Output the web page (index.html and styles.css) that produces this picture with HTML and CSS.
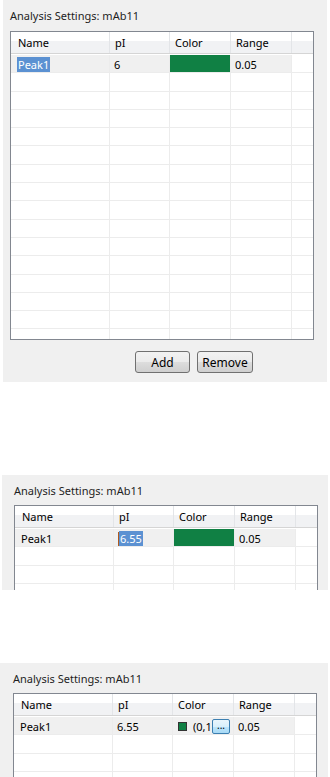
FILE: index.html
```html
<!DOCTYPE html>
<html lang="en">
<head>
  <meta charset="UTF-8">
  <meta name="viewport" content="width=device-width, initial-scale=1.0">
  <title>Analysis Settings</title>
  <link rel="stylesheet" href="styles.css">
</head>
<body>
  <!-- Panel 1: name selected -->
  <section class="panel panel-one">
    <div class="panel-title">Analysis Settings: mAb11</div>
    <div class="grid-table tall">
      <div class="grid-head">
        <div class="hcell">Name</div>
        <div class="hcell">pI</div>
        <div class="hcell">Color</div>
        <div class="hcell">Range</div>
        <div class="hcell filler"></div>
      </div>
      <div class="grid-body" id="body1"></div>
    </div>
    <div class="button-row">
      <button class="win-btn add">Add</button>
      <button class="win-btn">Remove</button>
    </div>
  </section>

  <!-- Panel 2: editing pI -->
  <section class="panel panel-two">
    <div class="panel-title">Analysis Settings: mAb11</div>
    <div class="grid-table">
      <div class="grid-head">
        <div class="hcell">Name</div>
        <div class="hcell">pI</div>
        <div class="hcell">Color</div>
        <div class="hcell">Range</div>
        <div class="hcell filler"></div>
      </div>
      <div class="grid-body">
        <div class="row first">
          <div class="cell">Peak1</div>
          <div class="cell"><span class="caret"></span><span class="selected">6.55</span></div>
          <div class="cell swatch"></div>
          <div class="cell">0.05</div>
          <div class="cell filler"></div>
        </div>
        <div class="row"><div class="cell"></div><div class="cell"></div><div class="cell"></div><div class="cell"></div><div class="cell filler"></div></div>
        <div class="row"><div class="cell"></div><div class="cell"></div><div class="cell"></div><div class="cell"></div><div class="cell filler"></div></div>
        <div class="row"><div class="cell"></div><div class="cell"></div><div class="cell"></div><div class="cell"></div><div class="cell filler"></div></div>
      </div>
    </div>
  </section>

  <!-- Panel 3: editing color -->
  <section class="panel panel-three">
    <div class="panel-title">Analysis Settings: mAb11</div>
    <div class="grid-table">
      <div class="grid-head">
        <div class="hcell">Name</div>
        <div class="hcell">pI</div>
        <div class="hcell">Color</div>
        <div class="hcell">Range</div>
        <div class="hcell filler"></div>
      </div>
      <div class="grid-body">
        <div class="row first">
          <div class="cell">Peak1</div>
          <div class="cell">6.55</div>
          <div class="cell color-edit">
            <span class="mini-swatch"></span>
            <span class="color-text">(0,1</span>
            <span class="dots-btn">...</span>
          </div>
          <div class="cell">0.05</div>
          <div class="cell filler"></div>
        </div>
        <div class="row"><div class="cell"></div><div class="cell"></div><div class="cell"></div><div class="cell"></div><div class="cell filler"></div></div>
        <div class="row"><div class="cell"></div><div class="cell"></div><div class="cell"></div><div class="cell"></div><div class="cell filler"></div></div>
        <div class="row"><div class="cell"></div><div class="cell"></div><div class="cell"></div><div class="cell"></div><div class="cell filler"></div></div>
      </div>
    </div>
  </section>

  <script>
    // fill the first table: one selected row, then empty rows
    const body1 = document.getElementById('body1');
    for (let i = 0; i < 17; i++) {
      const row = document.createElement('div');
      row.className = i === 0 ? 'row first' : 'row';
      if (i === 0) {
        row.innerHTML =
          '<div class="cell"><span class="selected">Peak1</span></div>' +
          '<div class="cell">6</div>' +
          '<div class="cell swatch"></div>' +
          '<div class="cell">0.05</div>' +
          '<div class="cell filler"></div>';
      } else {
        row.innerHTML = '<div class="cell"></div>'.repeat(4) + '<div class="cell filler"></div>';
      }
      body1.appendChild(row);
    }
  </script>
</body>
</html>
```

FILE: styles.css
```css
/* General */
body {
  margin: 0;
  background: #fff;
  font-family: "Noto Sans", "Open Sans", sans-serif;
  font-size: 11px;
  color: #000;
}

/* Panels */
.panel {
  background: #f0f0f0;
  box-sizing: border-box;
  overflow: hidden;
}

.panel-one {
  margin-left: 3px;
  width: 324px;
  height: 382px;
  padding: 7px 0 0 7px;
}

.panel-two {
  margin-top: 93px;
  margin-left: 2px;
  width: 326px;
  height: 115px;
  padding: 7px 0 0 12px;
}

.panel-three {
  margin-top: 73px;
  width: 328px;
  height: 114px;
  padding: 7px 0 0 13px;
}

.panel-title {
  height: 17px;
  line-height: 17px;
  margin-bottom: 7px;
  color: #1e1e1e;
}

.panel-two .panel-title,
.panel-three .panel-title {
  margin-bottom: 6px;
}

/* Table */
.grid-table {
  width: 304px;
  box-sizing: border-box;
  border: 1px solid #828790;
  background: #fff;
  overflow: hidden;
}

.grid-table.tall {
  height: 309px;
}

.panel-two .grid-table,
.panel-three .grid-table {
  border-bottom: none;
  height: 120px;
}

.grid-head,
.row {
  display: grid;
  grid-template-columns: 99px 60px 61px 61px 1fr;
}

.grid-head {
  height: 22px;
  background: linear-gradient(#fff 0, #fff 45%, #f1f2f4 45%, #f1f2f4 100%);
  border-bottom: 1px solid #d5d5d5;
  box-sizing: border-box;
}

.hcell {
  border-right: 1px solid #e3e5e8;
  padding: 3px 0 0 5px;
  line-height: 16px;
}

.hcell:first-child {
  padding-left: 7px;
}

.hcell.filler {
  border-right: none;
}

.grid-body {
  padding-top: 1px;
}

.row {
  height: 18.3px;
  box-sizing: border-box;
}

.cell {
  border-right: 1px solid #ececec;
  border-bottom: 1px solid #ececec;
  padding: 2px 0 0 4px;
  line-height: 15px;
  white-space: nowrap;
  overflow: hidden;
}

.cell:first-child {
  padding-left: 6px;
}

.cell.filler {
  border-right: none;
}

.row.first .cell {
  background: #f0f0f0;
}

.row.first .cell.filler {
  background: #fff;
}

.row.first .cell.swatch {
  background: #108044;
}

.selected {
  background: #5b91d2;
  color: #fff;
  padding: 0 1px;
}

.caret {
  display: inline-block;
  width: 1px;
  height: 14px;
  background: #b05a1c;
  vertical-align: -3px;
}

/* Color editor cell */
.color-edit {
  display: flex;
  align-items: center;
  padding-left: 5px;
}

.mini-swatch {
  flex: none;
  width: 7px;
  height: 7px;
  background: #108044;
  border: 1px solid #333;
  margin-right: 6px;
}

.color-text {
  flex: none;
  width: 19px;
  overflow: hidden;
}

.dots-btn {
  flex: none;
  width: 18px;
  height: 15px;
  box-sizing: border-box;
  border: 1px solid #3c7fb1;
  border-radius: 2px;
  background: linear-gradient(#eaf6fd, #d9f0fc 50%, #bee6fd 50%, #a7d9f5);
  font-size: 10px;
  line-height: 10px;
  text-align: center;
}

/* Buttons */
.button-row {
  display: flex;
  gap: 7px;
  margin-top: 11px;
  padding-left: 125px;
}

.win-btn {
  font-family: inherit;
  font-size: 12px;
  height: 22px;
  width: 56px;
  padding: 0;
  border: 1px solid #707070;
  border-radius: 3px;
  background: linear-gradient(#f2f2f2, #ebebeb 50%, #dddddd 50%, #cfcfcf);
  color: #000;
}

.win-btn.add {
  width: 55px;
}
```
